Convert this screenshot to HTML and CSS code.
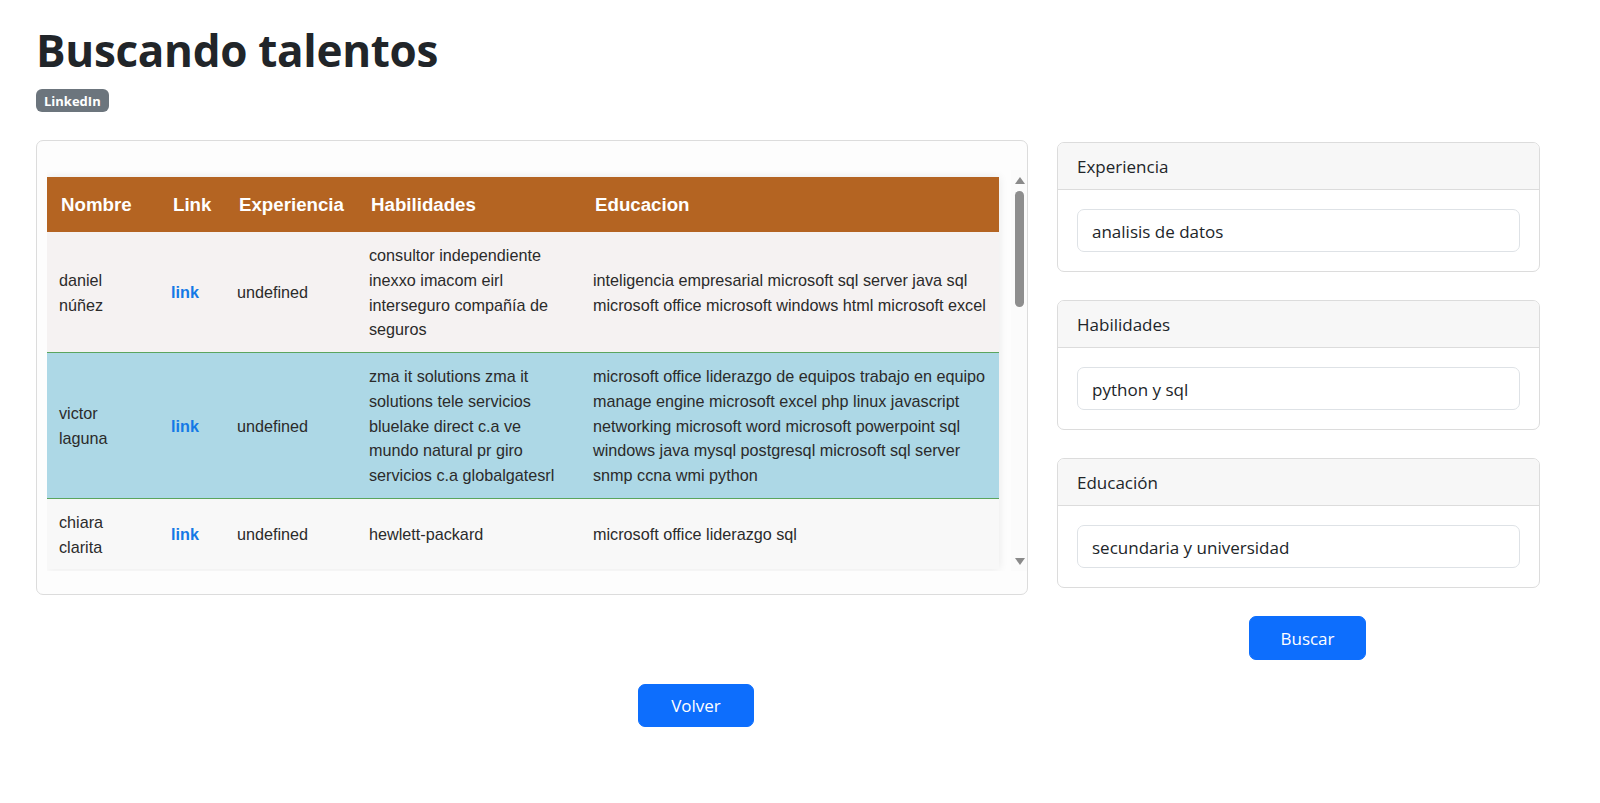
FILE: index.html
```html
<!DOCTYPE html>
<html lang="es">
<head>
<meta charset="utf-8">
<title>Buscando talentos</title>
<link rel="stylesheet" href="styles.css">
</head>
<body>
<div class="page">
  <h1 class="title">Buscando talentos</h1>
  <span class="badge">LinkedIn</span>

  <div class="main-row">
    <div class="results-card">
      <div class="table-area">
        <div class="table-scroll">
          <table class="talent-table">
            <colgroup>
              <col class="c-nombre"><col class="c-link"><col class="c-exp"><col class="c-hab"><col class="c-edu">
            </colgroup>
            <thead>
              <tr><th>Nombre</th><th>Link</th><th>Experiencia</th><th>Habilidades</th><th>Educacion</th></tr>
            </thead>
            <tbody>
              <tr class="row-a">
                <td class="name">daniel núñez</td>
                <td><a href="#" class="link">link</a></td>
                <td>undefined</td>
                <td>consultor independiente inexxo imacom eirl interseguro compañía de seguros</td>
                <td class="edu">inteligencia empresarial microsoft sql server java sql microsoft office microsoft windows html microsoft excel</td>
              </tr>
              <tr class="row-hl">
                <td class="name">victor laguna</td>
                <td><a href="#" class="link">link</a></td>
                <td>undefined</td>
                <td>zma it solutions zma it solutions tele servicios bluelake direct c.a ve mundo natural pr giro servicios c.a globalgatesrl</td>
                <td class="edu">microsoft office liderazgo de equipos trabajo en equipo manage engine microsoft excel php linux javascript networking microsoft word microsoft powerpoint sql windows java mysql postgresql microsoft sql server snmp ccna wmi python</td>
              </tr>
              <tr class="row-b">
                <td class="name">chiara clarita</td>
                <td><a href="#" class="link">link</a></td>
                <td>undefined</td>
                <td>hewlett-packard</td>
                <td class="edu">microsoft office liderazgo sql</td>
              </tr>
            </tbody>
          </table>
        </div>
        <div class="vscroll" aria-hidden="true">
          <div class="vscroll-btn"><span class="arrow-up"></span></div>
          <div class="vscroll-track"><div class="vscroll-thumb"></div></div>
          <div class="vscroll-btn"><span class="arrow-down"></span></div>
        </div>
      </div>
    </div>

    <div class="filters">
      <div class="filter-card">
        <div class="filter-header">Experiencia</div>
        <div class="filter-body"><input class="filter-input" type="text" value="analisis de datos"></div>
      </div>
      <div class="filter-card">
        <div class="filter-header">Habilidades</div>
        <div class="filter-body"><input class="filter-input" type="text" value="python y sql"></div>
      </div>
      <div class="filter-card">
        <div class="filter-header">Educación</div>
        <div class="filter-body"><input class="filter-input" type="text" value="secundaria y universidad"></div>
      </div>
      <button class="btn btn-buscar" type="button">Buscar</button>
    </div>
  </div>

  <button class="btn btn-volver" type="button">Volver</button>
</div>
</body>
</html>
```

FILE: styles.css
```css
* { box-sizing: border-box; }

html, body {
  margin: 0;
  background: #ffffff;
}

body {
  font-family: "Open Sans", "Noto Sans", sans-serif;
  font-size: 17px;
  line-height: 1.5;
  color: #212529;
}

.page {
  display: flex;
  flex-direction: column;
  align-items: flex-start;
  padding: 23px 0 0 36px;
}

.title {
  margin: 0;
  font-size: 44px;
  line-height: 54px;
  font-weight: 700;
  color: #212529;
  letter-spacing: -0.3px;
}

.badge {
  display: inline-flex;
  align-items: center;
  height: 23px;
  margin-top: 12px;
  padding: 1px 8px 0;
  font-size: 13px;
  line-height: 1;
  font-weight: 700;
  color: #ffffff;
  background: #6c757d;
  border-radius: 6px;
}

.main-row {
  display: flex;
  align-items: flex-start;
  gap: 29px;
  margin-top: 28px;
}

/* results card */
.results-card {
  width: 992px;
  padding: 29px 0 23px 10px;
  background: #fdfdfd;
  border: 1px solid #dcdcdc;
  border-radius: 7px;
}

.table-area {
  display: flex;
  height: 401px;
}

.table-scroll {
  flex: 1;
  overflow: hidden;
  padding: 7px 12px 0 0;
}

.vscroll {
  width: 16px;
  display: flex;
  flex-direction: column;
  background: #fbfbfb;
}

.vscroll-btn {
  height: 20px;
  display: flex;
  justify-content: center;
  align-items: center;
  padding-left: 1px;
}

.arrow-up,
.arrow-down {
  width: 0;
  height: 0;
  border-left: 5.5px solid transparent;
  border-right: 5.5px solid transparent;
}
.arrow-up { border-bottom: 7px solid #8a8a8a; }
.arrow-down { border-top: 7px solid #8a8a8a; }

.vscroll-track {
  flex: 1;
  padding: 1px 3px 0 4px;
}

.vscroll-thumb {
  height: 116px;
  background: #8e8e8e;
  border-radius: 5px;
}

.talent-table {
  width: 952px;
  table-layout: fixed;
  border-collapse: collapse;
  font-family: "Liberation Sans", Arial, sans-serif;
  font-size: 16.2px;
  line-height: 24.75px;
  color: #2b2b2b;
  box-shadow: 0 0 9px rgba(0, 0, 0, 0.09);
}

.c-nombre { width: 112px; }
.c-link { width: 66px; }
.c-exp { width: 132px; }
.c-hab { width: 224px; }
.c-edu { width: 418px; }

.talent-table th {
  background: #b46422;
  color: #ffffff;
  font-size: 18.7px;
  line-height: 27px;
  font-weight: 700;
  text-align: left;
  padding: 14px 8px 14px 14px;
}

.talent-table td {
  padding: 11px 12px 10px 12px;
  vertical-align: middle;
  text-align: left;
}

.talent-table td.name { padding-right: 16px; }
.talent-table td.edu { padding-right: 8px; }

.talent-table tbody tr {
  border-bottom: 1px solid #5aa55e;
}
.talent-table tbody tr:last-child {
  border-bottom: 0;
}

.row-a { background: #f5f2f2; }
.row-b { background: #f8f8f8; }
.row-hl { background: #add8e6; }

.link {
  color: #1479e6;
  font-weight: 700;
  text-decoration: none;
}

/* filters */
.filters {
  width: 483px;
  padding-top: 2px;
  display: flex;
  flex-direction: column;
  align-items: flex-start;
  gap: 28px;
}

.filter-card {
  width: 100%;
  background: #ffffff;
  border: 1px solid #dcdcdc;
  border-radius: 7px;
  overflow: hidden;
}

.filter-header {
  height: 47px;
  display: flex;
  align-items: center;
  padding: 2px 19px 0;
  background: #f7f7f7;
  border-bottom: 1px solid #dcdcdc;
  color: #212529;
}

.filter-body {
  padding: 19px;
}

.filter-input {
  display: block;
  width: 100%;
  height: 43px;
  padding: 2px 14px 0;
  font-family: "Open Sans", "Noto Sans", sans-serif;
  font-size: 17px;
  color: #212529;
  background: #ffffff;
  border: 1px solid #dee2e6;
  border-radius: 7px;
  outline: none;
}

.btn {
  font-family: "Open Sans", "Noto Sans", sans-serif;
  font-size: 17px;
  color: #ffffff;
  background: #0d6efd;
  border: 1px solid #0d6efd;
  border-radius: 7px;
  cursor: pointer;
}

.btn-buscar {
  width: 117px;
  height: 44px;
  margin-left: 192px;
}

.btn-volver {
  width: 116px;
  height: 43px;
  margin-top: 24px;
  margin-left: 602px;
}
```
